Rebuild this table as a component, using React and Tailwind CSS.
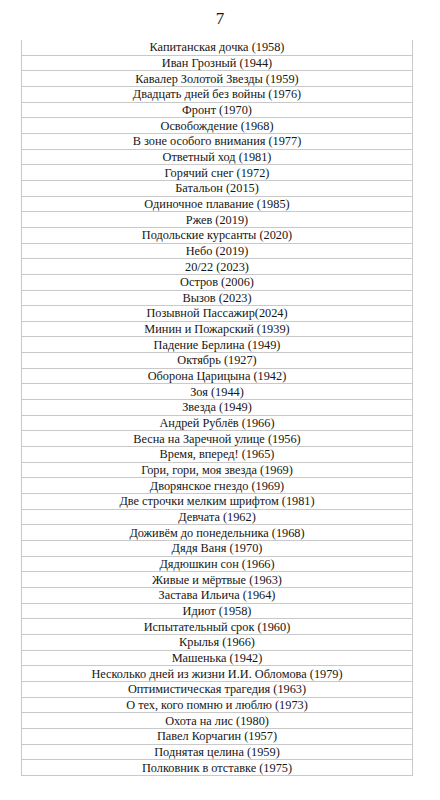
const rows = [
  "Капитанская дочка (1958)",
  "Иван Грозный (1944)",
  "Кавалер Золотой Звезды (1959)",
  "Двадцать дней без войны (1976)",
  "Фронт (1970)",
  "Освобождение (1968)",
  "В зоне особого внимания (1977)",
  "Ответный ход (1981)",
  "Горячий снег (1972)",
  "Батальон (2015)",
  "Одиночное плавание (1985)",
  "Ржев (2019)",
  "Подольские курсанты (2020)",
  "Небо (2019)",
  "20/22 (2023)",
  "Остров (2006)",
  "Вызов (2023)",
  "Позывной Пассажир(2024)",
  "Минин и Пожарский (1939)",
  "Падение Берлина (1949)",
  "Октябрь (1927)",
  "Оборона Царицына (1942)",
  "Зоя (1944)",
  "Звезда (1949)",
  "Андрей Рублёв (1966)",
  "Весна на Заречной улице (1956)",
  "Время, вперед! (1965)",
  "Гори, гори, моя звезда (1969)",
  "Дворянское гнездо (1969)",
  "Две строчки мелким шрифтом (1981)",
  "Девчата (1962)",
  "Доживём до понедельника (1968)",
  "Дядя Ваня (1970)",
  "Дядюшкин сон (1966)",
  "Живые и мёртвые (1963)",
  "Застава Ильича (1964)",
  "Идиот (1958)",
  "Испытательный срок (1960)",
  "Крылья (1966)",
  "Машенька (1942)",
  "Несколько дней из жизни И.И. Обломова (1979)",
  "Оптимистическая трагедия (1963)",
  "О тех, кого помню и люблю (1973)",
  "Охота на лис (1980)",
  "Павел Корчагин (1957)",
  "Поднятая целина (1959)",
  "Полковник в отставке (1975)",
];

export default function App() {
  return (
    <div className="w-[440px] h-[800px] bg-white text-[#161616] overflow-hidden font-['Liberation_Serif','Times_New_Roman',serif]">
      <div className="h-[40px] flex justify-center pt-[9px] text-[17px] leading-[20px]">7</div>
      <div className="ml-[21px] w-[392px] border-x border-[#c9c9c9]">
        {rows.map((r, i) => (
          <div
            key={i}
            className="h-[15.66px] border-b border-[#c9c9c9] flex items-center justify-center text-[12.3px] leading-[14px] whitespace-nowrap"
          >
            {r}
          </div>
        ))}
      </div>
    </div>
  );
}
